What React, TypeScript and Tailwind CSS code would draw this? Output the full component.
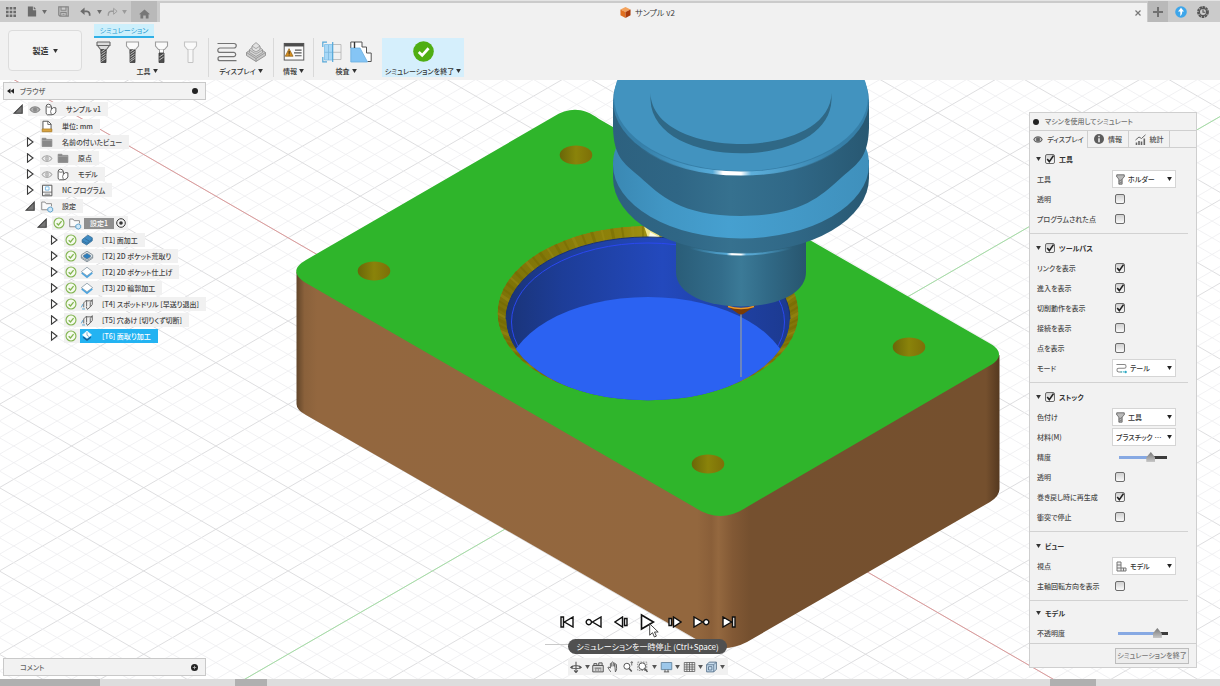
import React from "react";
import type { ReactNode } from "react";

/* ---------- small shared pieces ---------- */

function Caret({ className = "" }: { className?: string }) {
  return (
    <svg viewBox="0 0 6 5" className={`h-[4px] w-[5px] shrink-0 ${className}`} aria-hidden="true">
      <path d="M0 0h6L3 5z" fill="currentColor" />
    </svg>
  );
}

function Icon({
  children,
  className = "h-[14px] w-[14px]",
  box = "0 0 16 16",
}: {
  children: ReactNode;
  className?: string;
  box?: string;
}) {
  return (
    <svg viewBox={box} className={`shrink-0 ${className}`} fill="none" stroke="currentColor" aria-hidden="true">
      {children}
    </svg>
  );
}

/* ---------- title bar ---------- */

function TitleBar() {
  return (
    <div className="flex h-[22px] border-t border-[#e4e4e4] bg-[#cbcbcb] text-[#6b6b6b]">
      <div className="flex w-40 shrink-0 items-center pl-1.5">
        <div className="flex items-center gap-[11px]">
          <button type="button" aria-label="データ パネル" className="flex">
            <Icon box="0 0 10 10" className="h-[10px] w-[10px]">
              <path d="M0 0h2.6v2.6H0zM3.7 0h2.6v2.6H3.7zM7.4 0H10v2.6H7.4zM0 3.7h2.6v2.6H0zM3.7 3.7h2.6v2.6H3.7zM7.4 3.7H10v2.6H7.4zM0 7.4h2.6V10H0zM3.7 7.4h2.6V10H3.7zM7.4 7.4H10V10H7.4z" fill="currentColor" stroke="none" />
            </Icon>
          </button>
          <button type="button" aria-label="ファイル" className="flex w-5 items-center justify-between">
            <Icon box="0 0 10 12" className="h-[11px] w-[10px]">
              <path d="M.5.5h5.5v4h3.5v7h-9z" fill="currentColor" stroke="none" />
              <path d="M6.9.5 9.5 3.5H6.9z" fill="currentColor" stroke="none" />
            </Icon>
            <Caret />
          </button>
          <button type="button" aria-label="保存" className="flex text-[#858585]">
            <Icon box="0 0 11 11" className="h-[11px] w-[11px]">
              <path d="M.8.8h9.4v9.4H2L.8 9z" strokeWidth="1.3" />
              <path d="M3 .8v3.4h5V.8M2.8 10V6.4h5.4V10M4.4 8.2h2.2" strokeWidth="1.1" />
            </Icon>
          </button>
          <div className="flex items-center gap-[5px]">
            <button type="button" aria-label="元に戻す" className="flex w-[22px] items-center justify-between">
              <Icon box="0 0 12 10" className="h-[10px] w-[11px]">
                <path d="M4.5 4.2H7.5Q10.8 4.5 10.6 9" strokeWidth="1.9" />
                <path d="M5 .2V8.2L.3 4.2z" fill="currentColor" stroke="none" />
              </Icon>
              <Caret />
            </button>
            <button type="button" aria-label="やり直し" className="flex w-5 items-center justify-between text-[#9b9b9b]">
              <Icon box="0 0 12 10" className="h-[10px] w-[11px]">
                <path d="M7.5 4.2H4.5Q1.2 4.5 1.4 9" strokeWidth="1.5" />
                <path d="M7.2 1V7.5L11 4.2z" strokeWidth="1" />
              </Icon>
              <Caret />
            </button>
          </div>
        </div>
        <button type="button" aria-label="ホーム" className="ml-1 flex h-full w-[26px] items-center justify-center bg-[#b9b9b9] pt-1 text-[#777]">
          <Icon box="0 0 12 10" className="h-[10px] w-[11px]">
            <path d="M6 0 12 5.4H10.4V10H7.4V6.6H4.6V10H1.6V5.4H0z" fill="currentColor" stroke="none" />
          </Icon>
        </button>
      </div>
      <div className="mt-0.5 flex flex-1 items-center bg-[#f1f1f1]">
        <div className="flex flex-1 items-center justify-center gap-1 text-[8px] leading-none text-[#3d3d3d]">
          <svg viewBox="0 0 12 12" className="h-[11px] w-[11px]" aria-hidden="true">
            <path d="M6 0 11.5 2.6 6 5.4.5 2.6z" fill="#f3a25c" />
            <path d="M.5 2.6 6 5.4V12L.5 9z" fill="#e07020" />
            <path d="M11.5 2.6 6 5.4V12l5.5-3z" fill="#a93c0c" />
          </svg>
          サンプル v2
        </div>
        <button type="button" aria-label="タブを閉じる" className="mr-1.5 flex text-[#777]">
          <Icon box="0 0 6 6" className="h-[6px] w-[6px]">
            <path d="M.5.5l5 5M5.5.5l-5 5" strokeWidth="1.2" />
          </Icon>
        </button>
      </div>
      <div className="flex w-[73px] shrink-0 items-center">
        <button type="button" aria-label="新しいデザイン" className="ml-px flex h-full w-5 items-center justify-center bg-[#b9b9b9] text-[#707070]">
          <Icon box="0 0 10 10" className="h-[10px] w-[10px]">
            <path d="M5 0v10M0 5h10" strokeWidth="2" />
          </Icon>
        </button>
        <button type="button" aria-label="更新" className="ml-[7px] flex">
          <svg viewBox="0 0 12 12" className="h-[12px] w-[12px]">
            <circle cx="6" cy="6" r="5.8" fill="#3ea6ea" />
            <path d="M6 1.8 9 5.4H7.2C7.2 7.5 6.8 9 5 10c.6-1.5.4-3 .2-4.6H3z" fill="#fff" />
          </svg>
        </button>
        <button type="button" aria-label="ジョブの状態" className="ml-[10px] flex text-[#555]">
          <Icon box="0 0 12 12" className="h-[12px] w-[12px]">
            <circle cx="6" cy="6" r="5" strokeWidth="1.8" strokeDasharray="2.6 .6" />
            <circle cx="6" cy="6" r="3.6" strokeWidth="1.2" />
            <path d="M6 3.5V6.2h2.3" strokeWidth="1.1" />
          </Icon>
        </button>
      </div>
    </div>
  );
}

/* ---------- ribbon ---------- */

const hatch = "M8.3 12l4.4-3M8.3 14.5l4.4-3M8.3 17l4.4-3M8.3 19.5l4.4-3M8.3 21.5l4.4-3";

function ToolIcon({ kind }: { kind: "holder" | "shaft" | "flute" | "none" }) {
  const body = kind === "none" ? "#c4c4c4" : kind === "holder" ? "#666" : "#9d9d9d";
  return (
    <Icon box="0 0 21 24" className="h-[24px] w-[21px]">
      <path
        d={kind === "holder" ? "M4 2h13M4 2v3.5h13V2M4.5 5.5l3 4h6l3-4" : "M4.5 2h12v4l-3 3.5h-6l-3-3.5z"}
        stroke={body}
        strokeWidth="1.1"
        fill={kind === "holder" ? "#dcdcdc" : "#fafafa"}
      />
      {kind === "none" ? (
        <path d="M8 9.5V22.5h5V9.5" stroke={body} fill="#f7f7f7" />
      ) : (
        <>
          <path d={kind === "flute" ? "M8.5 9.5v4h4v-4" : "M8 9.5h5v4H8z"} stroke={body} fill={kind === "flute" ? "#fff" : "#777"} />
          <path d={kind === "flute" ? "M8 13h5v9.5H8z" : "M8 10h5v12.5H8z"} fill="#4d4d4d" stroke="#3b3b3b" strokeWidth=".8" />
          <path d={kind === "flute" ? "M8.3 17l4.4-3M8.3 20l4.4-3" : hatch} stroke="#c9c9c9" strokeWidth=".9" />
        </>
      )}
    </Icon>
  );
}

function RibbonGroup({ label, children, className = "" }: { label: string; children: ReactNode; className?: string }) {
  return (
    <div className={`flex flex-col ${className}`}>
      <div className="flex h-[27px] items-center justify-center">{children}</div>
      <button type="button" className="flex h-3 items-center justify-center gap-0.5 whitespace-nowrap text-[7px] font-medium leading-none text-[#333]">
        {label}
        <Caret />
      </button>
    </div>
  );
}

function RibbonButton({ label, children }: { label: string; children: ReactNode }) {
  return (
    <button type="button" aria-label={label} className="flex w-[29px] items-center justify-center">
      {children}
    </button>
  );
}

function Ribbon() {
  return (
    <div className="flex h-[58px] bg-[#f1f1f1] pl-2">
      <button
        type="button"
        className="mt-2 flex h-[41px] w-[74px] items-center justify-center gap-1 rounded-sm border border-[#dcdcdc] bg-[#f4f4f4] text-[8px] font-bold leading-none text-[#333]"
      >
        製造
        <Caret />
      </button>
      <div className="ml-1 flex flex-col pt-0.5">
        <button
          type="button"
          className="ml-2 flex h-[14px] w-[60px] items-center justify-center whitespace-nowrap border-b-2 border-[#2fb0e6] bg-[#cdf0fc] text-[7px] leading-none text-[#2a9bd0]"
        >
          シミュレーション
        </button>
        <div className="flex">
          <RibbonGroup label="工具" className="border-r border-[#d9d9d9] px-[3px]">
            <RibbonButton label="ホルダー">
              <ToolIcon kind="holder" />
            </RibbonButton>
            <RibbonButton label="シャフト">
              <ToolIcon kind="shaft" />
            </RibbonButton>
            <RibbonButton label="刃">
              <ToolIcon kind="flute" />
            </RibbonButton>
            <RibbonButton label="非表示">
              <ToolIcon kind="none" />
            </RibbonButton>
          </RibbonGroup>
          <RibbonGroup label="ディスプレイ" className="border-r border-[#d9d9d9] px-[3px]">
            <RibbonButton label="ツールパス">
              <Icon box="0 0 20 20" className="h-[20px] w-[20px] text-[#747474]">
                <path d="M.5 1.5H17a2.2 2.2 0 0 1 0 4.5H3a2.2 2.2 0 0 0 0 4.4H17a2.2 2.2 0 0 1 0 4.3H3a2 2 0 0 0 0 4H19.5" strokeWidth="1.2" />
              </Icon>
            </RibbonButton>
            <RibbonButton label="ストック">
              <Icon box="0 0 20 20" className="h-[20px] w-[20px] text-[#8f8f8f]">
                <path d="M10 4 19.5 10.5v3L10 19.5.5 13.5v-3z" fill="#c9c9c9" strokeWidth=".9" />
                <path d="M.5 10.5 10 16.5 19.5 10.5M10 16.5v3" strokeWidth=".8" />
                <path d="M10 2.5 16.5 7.5v3L10 14.5 3.5 10.5v-3z" fill="#d6d6d6" strokeWidth=".8" />
                <path d="M3.5 8l6.5 4 6.5-4" strokeWidth=".7" />
                <path d="M10 .6 14 4v3.5L10 10 6 7.5V4z" fill="#e2e2e2" strokeWidth=".8" />
                <path d="M6 4 10 6.6 14 4" strokeWidth=".7" />
              </Icon>
            </RibbonButton>
          </RibbonGroup>
          <RibbonGroup label="情報" className="border-r border-[#d9d9d9] px-[5px]">
            <RibbonButton label="情報">
              <Icon box="0 0 22 20" className="h-[19px] w-[22px]">
                <rect x=".7" y="1.5" width="20.6" height="17.5" fill="#fafafa" stroke="#555" />
                <path d="M.7 1.5h20.6v3.2H.7z" fill="#4d4d4d" stroke="none" />
                <path d="M5.8 7 10 15H1.8z" fill="#d89020" stroke="#8a5a10" strokeWidth=".7" />
                <path d="M5.9 9.5v3M5.9 13.3v.9" stroke="#222" />
                <path d="M12 8.5h7M11 11.5h8M12 14.5h7" stroke="#555" strokeWidth="1.2" />
              </Icon>
            </RibbonButton>
          </RibbonGroup>
          <RibbonGroup label="検査" className="px-[3px]">
            <RibbonButton label="断面解析">
              <Icon box="0 0 20 22" className="h-[22px] w-[20px]">
                <path d="M2.5 3.5h8v15.500h-8z" fill="#a7d8f7" stroke="#7dbfe8" strokeWidth=".8" />
                <path d="M10.5 3.5h8.5v15h-8.5M10.5 11.3h8.5" stroke="#b3b3b3" strokeWidth=".8" />
                <path d="M6.5 4v15M2.5 11.3h8" stroke="#7cb6dc" strokeWidth=".8" />
                <path d="M5 1.2H.8V6M.8 16v4.8H5M10.7 1v20" stroke="#55a7d8" strokeWidth="1.2" />
              </Icon>
            </RibbonButton>
            <RibbonButton label="比較">
              <Icon box="0 0 22 22" className="h-[22px] w-[22px]">
                <path d="M.8 7V1H12v5h4.5v6h4.7v8.5h-4" stroke="#555" fill="#fff" />
                <path d="M.8 7H10L17.5 21H.8z" fill="#85c5f5" stroke="#6baee0" strokeWidth=".8" />
                <path d="M4.5 1v6" stroke="#333" strokeWidth="1.4" />
              </Icon>
            </RibbonButton>
          </RibbonGroup>
          <RibbonGroup label="シミュレーションを終了" className="ml-1 w-[82px] bg-[#d5effc]">
            <RibbonButton label="シミュレーションを終了">
              <Icon box="0 0 22 22" className="h-[21px] w-[21px]">
                <circle cx="11" cy="11" r="10.8" fill="#4fae13" stroke="none" />
                <path d="M6 11.5 9.6 15 16.3 7.6" stroke="#fff" strokeWidth="2.8" />
              </Icon>
            </RibbonButton>
          </RibbonGroup>
        </div>
      </div>
    </div>
  );
}

/* ---------- browser tree ---------- */

function Twist({ open }: { open?: boolean }) {
  return (
    <Icon box="0 0 10 10" className="h-[10px] w-[12px] text-[#3c3c3c]">
      {open ? <path d="M9.2 1.2V9.2H1.2z" fill="#777" strokeWidth="1.1" /> : <path d="M2.5.8 8 5 2.5 9.2z" strokeWidth="1.1" fill="#fff" />}
    </Icon>
  );
}

function Eye({ off }: { off?: boolean }) {
  return (
    <Icon box="0 0 14 10" className={off ? "h-[9px] w-[14px] text-[#b0b0b0]" : "h-[9px] w-[14px] text-[#8a8a8a]"}>
      <path d="M1.5 5C4 .8 10 .8 12.5 5 10 9.2 4 9.2 1.5 5z" strokeWidth="1.2" fill={off ? "none" : "#b5b5b5"} />
      <circle cx="7" cy="5" r="1.9" fill={off ? "#ddd" : "currentColor"} />
      {off && <path d="M7 1v8" strokeWidth="1.2" />}
    </Icon>
  );
}

function CheckRing() {
  return (
    <Icon box="0 0 14 14" className="h-[12px] w-[14px] text-[#82b550]">
      <circle cx="7" cy="7" r="5.8" strokeWidth="1.3" fill="#f5faee" />
      <path d="M4.3 7.2 6.4 9.3 10 4.8" strokeWidth="1.5" />
    </Icon>
  );
}

function TreeIcon({ kind }: { kind: string }) {
  switch (kind) {
    case "component":
      return (
        <Icon className="h-[13px] w-[14px] text-[#555]">
          <path d="M2 4.5Q2 1.5 5 1.5T8.5 4.5V7.5Q11 4.5 14 6V11Q12.5 14.5 9 14.5H3.5Q2 14 2 12z" fill="#fff" strokeWidth="1.2" />
          <path d="M8.5 7.5Q6.5 10 8.5 14.3M2.5 4.5q3 1.5 5.8 0" strokeWidth="1" />
        </Icon>
      );
    case "units":
      return (
        <Icon className="h-[13px] w-[14px] text-[#555]">
          <path d="M3 1.5h6.5L13 5v8.5H3z" fill="#fff" strokeWidth="1.2" />
          <path d="M9 1.5V5.5h4" strokeWidth="1" />
          <path d="M2 11h12v3.5H2z" fill="#d9a441" stroke="#a87820" strokeWidth=".8" />
        </Icon>
      );
    case "folder":
      return (
        <Icon className="h-[12px] w-[14px] text-[#888]">
          <path d="M1.5 3h5l1 1.5h7V14h-13z" fill="currentColor" strokeWidth="1" />
          <path d="M1.5 6h13" stroke="#a5a5a5" />
        </Icon>
      );
    case "nc":
      return (
        <Icon className="h-[13px] w-[14px] text-[#555]">
          <path d="M2.5 1.5h11.5v13H2.5z" fill="#fff" strokeWidth="1.2" />
          <path d="M2.5 10h11.5M5 12.5h7" strokeWidth="1" />
          <path d="M6 3.5h4.5v4H6z" stroke="#67aedd" strokeWidth="1" />
        </Icon>
      );
    case "setup":
      return (
        <Icon className="h-[13px] w-[14px] text-[#8d8d8d]">
          <path d="M9 12H1.5V2.5h4L7 4.5h6.5V8" strokeWidth="1.2" fill="#fafafa" />
          <path d="m12 8.5 3 1.6v3.3L12 15l-3-1.6v-3.3z" fill="#cfe8f8" stroke="#4a94c4" strokeWidth="1" />
        </Icon>
      );
    case "face":
      return (
        <Icon className="h-[12px] w-[14px] text-[#2f658f]">
          <path d="M1.5 7.5 9 1.5l6 3.5v4L7.5 14.5 1.5 11z" fill="#3f8cc4" strokeWidth="1" />
          <path d="M2 9l6 3.5L15 7M5 6l6 3.5" strokeWidth=".9" />
        </Icon>
      );
    case "pocket":
      return (
        <Icon className="h-[13px] w-[14px] text-[#73818b]">
          <path d="M8 1.5 15 6v4l-7 4.5L1 10V6z" fill="#e3e8ec" strokeWidth="1" />
          <path d="M8 4 12.5 6.8v1.5L8 11.3 3.5 8.3V6.8z" fill="#2d7ebd" strokeWidth=".8" />
          <path d="M1 8.5 8 13l7-4.5" strokeWidth=".9" />
        </Icon>
      );
    case "contour":
      return (
        <Icon className="h-[13px] w-[14px] text-[#8a9aa5]">
          <path d="M8 1.5 15 7l-7 5-7-5z" fill="#fff" strokeWidth="1" />
          <path d="M1.5 8.5 8 13.8l6.5-5.3" stroke="#4fa4dd" strokeWidth="2" />
        </Icon>
      );
    case "drill":
      return (
        <Icon className="h-[13px] w-[14px] text-[#666]">
          <path d="M4 11.5V6l3.5-3.5v8M7 11l1.5 3 3.5-3V5.5L14.5 2v6L12 11M7.5 3.5H14" strokeWidth="1.2" />
          <path d="M1 11.5 3 7.5M2 13.5h3.5" stroke="#56a0d0" strokeWidth="1.2" />
        </Icon>
      );
    default:
      return (
        <Icon className="h-[12px] w-[14px] text-white">
          <path d="M8 1.5 14 6.5 8 11 2 6.5z" fill="#fff" />
          <path d="M3 9.5 8 13.5l5-4" stroke="#1a5f96" strokeWidth="2" />
          <path d="M8 3v4l3 2" stroke="#5a91b8" />
        </Icon>
      );
  }
}

type Node = {
  text: string;
  icon: string;
  open?: boolean;
  leaf?: boolean;
  eye?: "on" | "off";
  check?: boolean;
  chip?: boolean;
  selected?: boolean;
  children?: Node[];
};

const tree: Node = {
  text: "サンプル v1",
  icon: "component",
  eye: "on",
  open: true,
  children: [
    { text: "単位: mm", icon: "units", leaf: true },
    { text: "名前の付いたビュー", icon: "folder" },
    { text: "原点", icon: "folder", eye: "off" },
    { text: "モデル", icon: "component", eye: "off" },
    { text: "NC プログラム", icon: "nc" },
    {
      text: "設定",
      icon: "setup",
      open: true,
      children: [
        {
          text: "設定1",
          icon: "setup",
          open: true,
          check: true,
          chip: true,
          children: [
            { text: "[T1] 面加工", icon: "face", check: true },
            { text: "[T2] 2D ポケット荒取り", icon: "pocket", check: true },
            { text: "[T2] 2D ポケット仕上げ", icon: "contour", check: true },
            { text: "[T3] 2D 輪郭加工", icon: "contour", check: true },
            { text: "[T4] スポットドリル [早送り退出]", icon: "drill", check: true },
            { text: "[T5] 穴あけ [切りくず切断]", icon: "drill", check: true },
            { text: "[T6] 面取り加工", icon: "chamfer", check: true, selected: true },
          ],
        },
      ],
    },
  ],
};

function TreeNode({ node }: { node: Node }) {
  return (
    <li>
      <div className="flex h-4 items-center gap-1">
        <span className="flex w-3 shrink-0 justify-center">{!node.leaf && <Twist open={node.open} />}</span>
        <div className="flex h-[14px] items-center gap-0.5 bg-[#f1f1f1]">
          {node.eye && <Eye off={node.eye === "off"} />}
          {node.check && <CheckRing />}
          <span className={node.selected ? "flex h-full items-center bg-[#23b3f2] text-white" : "flex h-full items-center"}>
            <TreeIcon kind={node.icon} />
            {node.chip ? (
              <>
                <span className="ml-0.5 flex h-[11px] w-[30px] items-center justify-center bg-[#8f8f8f] text-white">{node.text}</span>
                <Icon box="0 0 10 10" className="mx-0.5 h-[10px] w-[10px] text-[#333]">
                  <circle cx="5" cy="5" r="4.3" strokeWidth="1" />
                  <circle cx="5" cy="5" r="1.8" fill="currentColor" stroke="none" />
                </Icon>
              </>
            ) : (
              <span className="whitespace-nowrap pl-2 pr-[7px]">{node.text}</span>
            )}
          </span>
        </div>
      </div>
      {node.children && (
        <ul className="pl-3 pt-px">
          {node.children.map((c) => (
            <TreeNode key={c.text} node={c} />
          ))}
        </ul>
      )}
    </li>
  );
}

function BrowserPanel() {
  return (
    <section className="w-[203px] text-[7px] font-medium leading-none text-[#444]">
      <header className="flex h-[18px] items-center border border-[#c9c9c9] bg-[#f2f2f2] px-[3px]">
        <button type="button" aria-label="折りたたむ" className="flex">
          <Icon box="0 0 8 6" className="h-[6px] w-[7px]">
            <path d="M4 0v6L0 3zM8 0v6L4 3z" fill="#222" stroke="none" />
          </Icon>
        </button>
        <h2 className="ml-1.5 flex-1 text-[#666]">ブラウザ</h2>
        <span className="mr-1 h-[6px] w-[6px] rounded-full bg-[#222]" />
      </header>
      <ul className="pl-[9px] pt-px">
        <TreeNode node={tree} />
      </ul>
    </section>
  );
}

function CommentPanel() {
  return (
    <section className="flex h-[18px] w-[203px] items-center border border-[#c9c9c9] bg-[#f2f2f2] px-[3px] text-[7px] font-medium leading-none text-[#666]">
      <h2 className="flex-1 pl-[13px]">コメント</h2>
      <button type="button" aria-label="コメントを追加" className="mr-1 flex">
        <Icon box="0 0 8 8" className="h-[7px] w-[7px]">
          <circle cx="4" cy="4" r="4" fill="#222" stroke="none" />
          <path d="M4 2v4M2 4h4" stroke="#bbb" strokeWidth=".9" />
        </Icon>
      </button>
    </section>
  );
}

/* ---------- simulate dialog ---------- */

function Check({ id, checked }: { id: string; checked?: boolean }) {
  return (
    <span className="grid h-[10px] w-[10px] shrink-0">
      <input
        id={id}
        type="checkbox"
        defaultChecked={checked}
        className="peer col-start-1 row-start-1 h-[10px] w-[10px] appearance-none rounded-[2px] border border-[#6c6c6c] bg-linear-to-b from-[#d0d0d0] to-[#fafafa]"
      />
      <svg viewBox="0 0 10 10" className="pointer-events-none invisible col-start-1 row-start-1 h-[10px] w-[10px] peer-checked:visible" aria-hidden="true">
        <path d="M2.2 5 4.3 7.6 8.5 1.6" fill="none" stroke="#222" strokeWidth="1.6" />
      </svg>
    </span>
  );
}

function Section({
  title,
  toggle,
  children,
  className = "border-b pb-1 pt-1",
}: {
  title: string;
  toggle?: string;
  children: ReactNode;
  className?: string;
}) {
  return (
    <section className={`mr-2 border-[#d2d2d2] ${className}`}>
      <h3 className="flex h-5 items-center pl-1.5 font-bold text-[#333]">
        <Caret className="mr-1" />
        {toggle ? (
          <>
            <Check id={toggle} checked />
            <label htmlFor={toggle} className="pl-1">
              {title}
            </label>
          </>
        ) : (
          title
        )}
      </h3>
      {children}
    </section>
  );
}

function Row({ id, label, children }: { id: string; label: string; children: ReactNode }) {
  return (
    <div className="flex h-5 items-center pl-[7px]">
      <label htmlFor={id} className="w-[75px] shrink-0 whitespace-nowrap">
        {label}
      </label>
      {children}
    </div>
  );
}

function CheckRow({ id, label, checked }: { id: string; label: string; checked?: boolean }) {
  return (
    <Row id={id} label={label}>
      <span className="pl-[3px]">
        <Check id={id} checked={checked} />
      </span>
    </Row>
  );
}

function SelectRow({ id, label, value, icon }: { id: string; label: string; value: string; icon?: ReactNode }) {
  return (
    <Row id={id} label={label}>
      <span className="flex h-[18px] w-[64px] items-center border border-[#d5d5d5] bg-white px-[3px]">
        {icon && <span className="mr-[3px] flex shrink-0">{icon}</span>}
        <select id={id} className="min-w-0 flex-1 appearance-none overflow-hidden text-ellipsis bg-transparent text-[7px] font-medium leading-none text-[#333]">
          <option>{value}</option>
        </select>
        <Caret className="text-[#222]" />
      </span>
    </Row>
  );
}

const thumb =
  "[&::-webkit-slider-thumb]:h-[10px] [&::-webkit-slider-thumb]:w-[9px] [&::-webkit-slider-thumb]:appearance-none [&::-webkit-slider-thumb]:bg-linear-to-b [&::-webkit-slider-thumb]:from-[#777] [&::-webkit-slider-thumb]:to-[#c8c8c8] [&::-webkit-slider-thumb]:[clip-path:polygon(50%_0,100%_55%,100%_100%,0_100%,0_55%)]";

const miniTool = (
  <Icon box="0 0 10 12" className="h-[11px] w-[9px] text-[#666]">
    <path d="M.8.8h8.4v2.4L6.8 5.5V11.2H3.2V5.5L.8 3.2z" fill="#b9b9b9" strokeWidth="1" />
    <path d="M3.2 8l3.6-2M3.2 10.5l3.6-2" strokeWidth=".8" />
  </Icon>
);

function SimulatePanel() {
  return (
    <section className="w-[168px] border border-[#cfcfcf] bg-[#f2f2f2] text-[7px] font-medium leading-none text-[#4a4a4a]">
      <header className="flex h-[17px] items-center px-[3px]">
        <span className="h-[6px] w-[6px] rounded-full bg-[#222]" />
        <h2 className="pl-1.5 text-[#707070]">マシンを使用してシミュレート</h2>
      </header>
      <div role="tablist" className="flex h-[18px] border-t border-[#cfcfcf]">
        <button type="button" role="tab" aria-selected="true" className="flex w-[58px] items-center justify-center gap-1 whitespace-nowrap border-r border-[#cfcfcf]">
          <Icon box="0 0 12 10" className="h-[9px] w-[10px] text-[#666]">
            <path d="M1 5C3 .8 9 .8 11 5 9 9.2 3 9.2 1 5z" strokeWidth="1.3" />
            <circle cx="6" cy="5" r="2.2" fill="currentColor" />
          </Icon>
          ディスプレイ
        </button>
        <button type="button" role="tab" aria-selected="false" className="flex w-[41px] items-center justify-center gap-1 border-b border-r border-[#cfcfcf]">
          <Icon box="0 0 10 10" className="h-[10px] w-[10px]">
            <circle cx="5" cy="5" r="5" fill="#5c5c5c" stroke="none" />
            <path d="M5 1.8v1.4M5 4.2v4" stroke="#fff" strokeWidth="1.4" />
          </Icon>
          情報
        </button>
        <button type="button" role="tab" aria-selected="false" className="flex w-[41px] items-center justify-center gap-1 border-b border-r border-[#cfcfcf]">
          <Icon box="0 0 11 11" className="h-[11px] w-[11px] text-[#666]">
            <path d="M1.5 11V8.5M4 11V7M6.5 11V7.5M9.3 11V4.5" strokeWidth="1.6" />
            <path d="M.5 6 4 3l2.5 1.5L10.5.8" strokeWidth="1" />
          </Icon>
          統計
        </button>
        <span className="flex-1 border-b border-[#cfcfcf]" />
      </div>

      <Section title="工具" toggle="sec-tool" className="border-b pb-1 pt-px">
        <SelectRow id="tool" label="工具" value="ホルダー" icon={miniTool} />
        <CheckRow id="tool-transparent" label="透明" />
        <CheckRow id="programmed-point" label="プログラムされた点" />
      </Section>

      <Section title="ツールパス" toggle="sec-path">
        <CheckRow id="links" label="リンクを表示" checked />
        <CheckRow id="entries" label="進入を表示" checked />
        <CheckRow id="cuts" label="切削動作を表示" checked />
        <CheckRow id="joins" label="接続を表示" />
        <CheckRow id="points" label="点を表示" />
        <SelectRow
          id="mode"
          label="モード"
          value="テール"
          icon={
            <Icon box="0 0 12 11" className="h-[11px] w-[11px] text-[#888]">
              <path d="M.5 1.2H9a1.9 1.9 0 0 1 0 4H3a1.9 1.9 0 0 0 0 4h3.5" strokeWidth="1.1" />
              <path d="M5 9.2h5" stroke="#4fc3cf" strokeWidth="1.2" strokeDasharray="1.5 .8" />
              <circle cx="10.5" cy="9.3" r="1.3" fill="#2da7c4" stroke="none" />
            </Icon>
          }
        />
      </Section>

      <Section title="ストック" toggle="sec-stock">
        <SelectRow id="coloring" label="色付け" value="工具" icon={miniTool} />
        <SelectRow id="material" label="材料(M)" value="プラスチック ビニ..." />
        <Row id="accuracy" label="精度">
          <input
            id="accuracy"
            type="range"
            defaultValue={70}
            className={`ml-[7px] h-[3px] w-12 appearance-none bg-linear-to-r from-[#87a9e3] from-70% to-[#3c3c3c] to-70% ${thumb}`}
          />
        </Row>
        <CheckRow id="stock-transparent" label="透明" />
        <CheckRow id="regen" label="巻き戻し時に再生成" checked />
        <CheckRow id="stop-on-hit" label="衝突で停止" />
      </Section>

      <Section title="ビュー">
        <SelectRow
          id="viewpoint"
          label="視点"
          value="モデル"
          icon={
            <Icon box="0 0 11 11" className="h-[11px] w-[11px] text-[#777]">
              <path d="M1 10V1h4v6h5v3zM1 4h4M1 7h4v3M7.5 7V10" strokeWidth="1" fill="#eee" />
            </Icon>
          }
        />
        <CheckRow id="spindle-dir" label="主軸回転方向を表示" />
      </Section>

      <Section title="モデル" className="pt-0.5">
        <Row id="opacity" label="不透明度">
          <input
            id="opacity"
            type="range"
            defaultValue={85}
            className={`ml-1.5 h-[3px] w-[50px] appearance-none bg-linear-to-r from-[#87a9e3] from-80% to-[#3c3c3c] to-80% ${thumb}`}
          />
        </Row>
      </Section>

      <footer className="flex h-6 items-center justify-end border-t border-[#cfcfcf] pr-[7px]">
        <button type="button" className="h-4 w-[74px] whitespace-nowrap border border-[#bdbdbd] bg-[#ececec] text-[7px] text-[#777]">
          シミュレーションを終了
        </button>
      </footer>
    </section>
  );
}

/* ---------- playback and navigation ---------- */

const play: { label: string; w: number; d: string }[] = [
  { label: "開始に移動", w: 14, d: "M1 1h2.5v10H1zM13 1v10L4.5 6z" },
  { label: "前の加工", w: 17, d: "M3.8 3.5a2.6 2.6 0 1 0 .01 0zM16 1v10L7.5 6z" },
  { label: "前の移動", w: 14, d: "M8.5 1v10L1 6zM10.5 2.5h2.5v7h-2.5z" },
  { label: "次の移動", w: 14, d: "M5.5 1v10L13 6zM1 2.5h2.5v7H1z" },
  { label: "次の加工", w: 17, d: "M13.2 3.5a2.6 2.6 0 1 0 .01 0zM1 1v10L9.5 6z" },
  { label: "終了に移動", w: 14, d: "M10.5 1H13v10h-2.5zM1 1v10L9.5 6z" },
];

function PlayButton({ item }: { item: { label: string; w: number; d: string } }) {
  return (
    <button type="button" aria-label={item.label} className="flex w-[27px] justify-center">
      <svg viewBox={`0 0 ${item.w} 12`} className="h-3" width={item.w} aria-hidden="true">
        <path d={item.d} fill="#fff" stroke="#111" strokeWidth="1.4" />
      </svg>
    </button>
  );
}

function Playback() {
  return (
    <div className="flex h-5 items-center">
      {play.slice(0, 3).map((p) => (
        <PlayButton key={p.label} item={p} />
      ))}
      <button type="button" aria-label="再生" className="relative flex w-[27px] justify-center">
        <svg viewBox="0 0 15 18" className="h-[18px] w-[15px]" aria-hidden="true">
          <path d="M1.5 2v14L13.5 9z" fill="#fff" stroke="#111" strokeWidth="1.6" />
        </svg>
        <svg viewBox="0 0 10 15" className="absolute left-[15px] top-[10px] h-[15px] w-[10px]" aria-hidden="true">
          <path d="M.7.8v11.4l2.8-2.5 1.9 4.3 2-.9-1.9-4.1H9.2z" fill="#fff" stroke="#333" strokeWidth=".9" />
        </svg>
      </button>
      {play.slice(3).map((p) => (
        <PlayButton key={p.label} item={p} />
      ))}
    </div>
  );
}

function NavBar() {
  return (
    <div className="flex h-[17px] w-[160px] items-center justify-between bg-[#f1f1f1] px-0.5 text-[#555]">
      <button type="button" aria-label="オービット" className="flex items-center gap-[3px]">
        <Icon className="h-[12px] w-[12px]">
          <path d="M8 1v14M5.5 12.5 8 15.5l2.5-3M1 8.5q7-5 14 0M1 8.5q7 3.5 14 0" strokeWidth="1.4" />
          <path d="M0 8.5 3.5 5.5V11zM16 8.5 12.5 5.5V11z" fill="currentColor" stroke="none" />
        </Icon>
        <Caret className="h-[3px] w-[4px]" />
      </button>
      <button type="button" aria-label="ビュー正面" className="flex">
        <Icon className="h-[12px] w-[12px]">
          <path d="M1 6h14v8.5H1zM2.5 6V3.5h4V6M9 6V2.5h4.5V6" strokeWidth="1.3" fill="#ddd" />
          <path d="M3.5 9.5h9M4 12h2M7.5 12h2M11 12h1.5" strokeWidth="1.2" />
        </Icon>
      </button>
      <button type="button" aria-label="画面移動" className="flex">
        <Icon className="h-[12px] w-[12px]">
          <path d="M5 14.5Q3 11.5 1.2 8.5q1.3-1.3 3.3 1V3.5q1-1.5 1.8 0V7.5M6.3 3V2q1-1.5 2 0V7M8.3 3q1-1.5 2 0V7.5M10.3 4.5q1.5-1.3 2.2 0L12.8 10q0 2.5-1.6 4.5z" fill="#fff" strokeWidth="1.2" />
        </Icon>
      </button>
      <button type="button" aria-label="ズーム" className="flex">
        <Icon className="h-[12px] w-[12px]">
          <circle cx="6.5" cy="7" r="4" strokeWidth="1.3" fill="#fff" />
          <path d="M9.5 10 13 14" strokeWidth="2" />
          <path d="M13 1v5M11.5 2.5 13 .8l1.5 1.7" strokeWidth="1.1" />
        </Icon>
      </button>
      <button type="button" aria-label="ウィンドウ ズーム" className="flex items-center gap-[3px]">
        <Icon className="h-[12px] w-[12px]">
          <path d="M1 1.5h12v11H1z" strokeWidth=".9" strokeDasharray="2 1.5" />
          <circle cx="7" cy="7" r="4.5" strokeWidth="1.3" fill="#fff" />
          <path d="M10 10 14 14.5" strokeWidth="2" />
        </Icon>
        <Caret className="h-[3px] w-[4px]" />
      </button>
      <button type="button" aria-label="表示設定" className="flex items-center gap-0.5">
        <Icon className="h-[12px] w-[13px]">
          <path d="M1 2h14v9.5H1z" fill="#9cc7ea" stroke="#6c8ca6" strokeWidth="1.3" />
          <path d="M6 11.5v3M10 11.5v3M4.5 14.5h7" strokeWidth="1.2" />
        </Icon>
        <Caret className="h-[3px] w-[4px]" />
      </button>
      <button type="button" aria-label="グリッドとスナップ" className="flex items-center gap-0.5">
        <Icon className="h-[12px] w-[13px]">
          <path d="M1 2h14v12H1zM1 5h14M1 8h14M1 11h14M4.5 2v12M8 2v12M11.5 2v12" strokeWidth="1" fill="#eee" />
        </Icon>
        <Caret className="h-[3px] w-[4px]" />
      </button>
      <button type="button" aria-label="ビューポート" className="flex items-center gap-0.5">
        <Icon className="h-[12px] w-[13px]">
          <path d="M1.5 5 5 1.5h9.5V11L11 14.5H1.5z" fill="#c9ddee" stroke="#56718a" strokeWidth="1.2" />
          <path d="M1.5 5H11v9.5M11 5l3.5-3.5M4 7.5h4.5V12H4z" stroke="#56718a" strokeWidth="1.1" />
        </Icon>
        <Caret className="h-[3px] w-[4px]" />
      </button>
    </div>
  );
}

/* ---------- 3D scene ---------- */

const SLOPE = 0.577;
const CX = 649;
const CY = 446;
const MINOR = 83.3 / 5;

function Grid() {
  const items: ReactNode[] = [];
  for (let i = -50; i <= 50; i++) {
    const major = i % 5 === 0;
    const c = CY + i * MINOR;
    items.push(
      <path
        key={i}
        d={`M-40 ${c - SLOPE * (CX + 40)}L1260 ${c + SLOPE * (1260 - CX)}M-40 ${c + SLOPE * (CX + 40)}L1260 ${c - SLOPE * (1260 - CX)}`}
        stroke={major ? "#dadadd" : "#ededf0"}
        strokeWidth={major ? 0.9 : 0.8}
      />
    );
  }
  return <g fill="none">{items}</g>;
}

function Chamfer() {
  const rays: ReactNode[] = [];
  for (let i = 0; i < 90; i++) {
    const a = (i / 90) * Math.PI * 2;
    rays.push(
      <path
        key={i}
        d={`M${648 + 151 * Math.cos(a)} ${313 + 88 * Math.sin(a)}L${648 + 140 * Math.cos(a)} ${319 + 81 * Math.sin(a)}`}
        stroke={i % 3 ? "#6e6400" : "#a09218"}
        strokeOpacity=".4"
        strokeWidth={i % 2 ? 2 : 3}
      />
    );
  }
  return <g>{rays}</g>;
}

const holes = [
  [576, 155],
  [374, 271],
  [909, 347],
  [708, 464],
];

function Scene() {
  return (
    <svg viewBox="0 80 1220 599" preserveAspectRatio="xMidYMid slice" className="absolute inset-0 h-full w-full" role="img" aria-label="サンプル v2">
      <defs>
        <linearGradient id="side" gradientUnits="userSpaceOnUse" x1="296" y1="0" x2="1000" y2="0">
          <stop offset="0" stopColor="#5f4328" />
          <stop offset=".012" stopColor="#8a613b" />
          <stop offset=".03" stopColor="#93673f" />
          <stop offset=".57" stopColor="#93673e" />
          <stop offset=".59" stopColor="#8a5f39" />
          <stop offset=".6" stopColor="#94683f" />
          <stop offset=".62" stopColor="#825935" />
          <stop offset=".645" stopColor="#75502f" />
          <stop offset=".98" stopColor="#75502e" />
          <stop offset="1" stopColor="#54381f" />
        </linearGradient>
        <linearGradient id="hole">
          <stop offset="0" stopColor="#6a6608" />
          <stop offset=".5" stopColor="#8a830a" />
          <stop offset="1" stopColor="#7d6f08" />
        </linearGradient>
        <linearGradient id="ring">
          <stop offset="0" stopColor="#7d7208" />
          <stop offset=".4" stopColor="#8f820a" />
          <stop offset=".52" stopColor="#a39414" />
          <stop offset="1" stopColor="#837508" />
        </linearGradient>
        <linearGradient id="pocket">
          <stop offset="0" stopColor="#1a3478" />
          <stop offset=".2" stopColor="#1d3d98" />
          <stop offset=".55" stopColor="#2349bd" />
          <stop offset="1" stopColor="#1c3a90" />
        </linearGradient>
        <linearGradient id="wall">
          <stop offset="0" stopColor="#2d617f" />
          <stop offset=".25" stopColor="#2f6685" />
          <stop offset=".46" stopColor="#36718f" />
          <stop offset=".7" stopColor="#306887" />
          <stop offset="1" stopColor="#285872" />
        </linearGradient>
        <linearGradient id="cone">
          <stop offset="0" stopColor="#3a88b3" />
          <stop offset=".2" stopColor="#4196c4" />
          <stop offset=".45" stopColor="#46a0d0" />
          <stop offset="1" stopColor="#3f90bc" />
        </linearGradient>
        <linearGradient id="stem">
          <stop offset="0" stopColor="#2a5d78" />
          <stop offset=".35" stopColor="#336d8b" />
          <stop offset=".5" stopColor="#3b7a97" />
          <stop offset=".7" stopColor="#316a87" />
          <stop offset="1" stopColor="#28566f" />
        </linearGradient>
        <linearGradient id="glint">
          <stop offset="0" stopColor="#4aa5d6" stopOpacity="0" />
          <stop offset=".36" stopColor="#57abd8" />
          <stop offset=".41" stopColor="#fff" />
          <stop offset=".5" stopColor="#fff" />
          <stop offset=".55" stopColor="#5fb0dc" />
          <stop offset="1" stopColor="#4aa5d6" stopOpacity="0" />
        </linearGradient>
        <clipPath id="rim">
          <ellipse cx="648" cy="313" rx="150.5" ry="87.3" />
        </clipPath>
        <clipPath id="bore">
          <ellipse cx="648" cy="319" rx="142" ry="82" />
        </clipPath>
      </defs>

      <rect x="-40" y="0" width="1300" height="800" fill="#fff" />
      <Grid />
      <path d="M-40 48.5 1260 798.5" stroke="#dd9a9a" strokeWidth="1" />
      <path d="M-40 843.5 1260 93.5" stroke="#a5dfa5" strokeWidth="1" />
      <path d="M545 644.5H735" stroke="#c9c9c9" />

      <path d="M296.5 272V404Q296.5 410 306 415L694 638Q720 656 747 642L990 502Q999.5 496 999.5 489V355L720 500z" fill="url(#side)" />
      <path
        d="M306 260C293 267.5 293 275 306 283L694 507C712 519 729 519 747 507L990 365.5C1002 359 1002 350 990 343.5L599 119C583 107 569 107 553 117z"
        fill="#2fb52b"
      />

      {holes.map(([x, y]) => (
        <ellipse key={x} cx={x} cy={y} rx="16.3" ry="9.5" fill="url(#hole)" />
      ))}

      <g clipPath="url(#rim)">
        <ellipse cx="648" cy="313" rx="150.5" ry="87.3" fill="url(#ring)" />
        <Chamfer />
        <path d="M644 226h12l4 12h-12z" fill="#efe58a" />
        <path d="M650 232l9 5h-10z" fill="#fffde8" />
        <g clipPath="url(#bore)">
          <ellipse cx="648" cy="319" rx="142" ry="82" fill="url(#pocket)" />
          <ellipse cx="648" cy="322" rx="136.5" ry="79" fill="none" stroke="#2b48f0" strokeWidth="1" />
          <ellipse cx="648" cy="379" rx="142" ry="82" fill="#2b62f2" />
        </g>
        <path d="M506 319A142 82 0 0 1 790 319" fill="none" stroke="#16307a" strokeWidth="1" />
      </g>

      <path d="M741 312v65" stroke="#8f9aa0" strokeWidth="1.3" />
      <path d="M724 304Q741 312 758 304L744 313.5Q741 315.5 738 313.5z" fill="#7a3c05" />
      <path d="M728 306.5Q741 310.5 754 306.5" fill="none" stroke="#e8982a" strokeWidth="1.5" />

      <path d="M676 225V272C676 318 806 318 806 272V225z" fill="url(#stem)" />
      <path d="M690 248Q741 261 792 248" fill="none" stroke="url(#glint)" strokeWidth="2" />

      <path d="M613 160V178A128 74.5 0 0 0 869 178V160z" fill="url(#wall)" />
      <path d="M613 164.5Q613 155 616 148H866Q869 155 869 164.5A128 74 0 0 1 613 164.5z" fill="url(#cone)" />
      <path
        d="M613 102V128C614 156 622 162 640 177C660 195 680 216 741 216S822 195 842 177C860 162 868 156 869 128V102z"
        fill="url(#wall)"
      />
      <ellipse cx="741" cy="101" rx="128" ry="74.5" fill="#367fa8" />
      <path d="M640 146Q680 173.5 741 173.5T842 146" fill="none" stroke="url(#glint)" strokeWidth="4" />
      <ellipse cx="741" cy="97" rx="127" ry="74" fill="#4293bf" />
      <path d="M650.5 93C652 161 830 161 831.5 93L831.5 100C829 171 653 171 650.5 100z" fill="#2f6886" />
    </svg>
  );
}

/* ---------- bottom strip ---------- */

function BottomStrip() {
  return (
    <div className="flex h-[7px] bg-[#dddddd]">
      <span className="w-[8.2%] bg-[#b0b0b0]" />
      <span className="w-[11.1%]" />
      <span className="w-[2.6%] bg-[#b0b0b0]" />
      <span className="w-[64.2%]" />
      <span className="w-[3.7%] bg-[#b0b0b0]" />
    </div>
  );
}

export default function App() {
  return (
    <div className="flex min-h-screen flex-col bg-white font-['Noto_Sans_CJK_JP',sans-serif] [font-feature-settings:'palt']">
      <TitleBar />
      <Ribbon />
      <main className="relative flex flex-1 overflow-hidden">
        <Scene />
        <div className="relative flex flex-1 pl-[3px] pr-[23px]">
          <div className="flex flex-col justify-between pb-[3px] pt-0.5">
            <BrowserPanel />
            <CommentPanel />
          </div>
          <div className="flex flex-1 flex-col items-center justify-end pb-1 pl-15">
            <Playback />
            <div role="tooltip" className="mb-1 mt-[7px] flex h-[15px] items-center whitespace-nowrap rounded-full bg-[#505050] px-2 text-[8px] leading-none text-white">
              シミュレーションを一時停止 (Ctrl+Space)
            </div>
            <NavBar />
          </div>
          <div className="pb-2.5 pt-8">
            <SimulatePanel />
          </div>
        </div>
      </main>
      <BottomStrip />
    </div>
  );
}
